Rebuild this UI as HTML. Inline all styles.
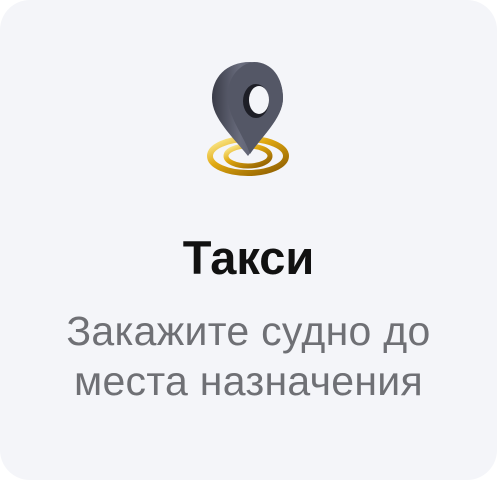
<!DOCTYPE html>
<html><head><style>
html,body{margin:0;padding:0;background:#fff;}
.card{position:absolute;left:0;top:0;width:497px;height:480px;background:#f4f5f9;border-radius:30px;overflow:hidden;font-family:"Liberation Sans",sans-serif;}
.t{position:absolute;left:0;width:497px;text-align:center;top:230px;font-size:47px;font-weight:bold;color:#111;}
.s{position:absolute;left:0;width:497px;text-align:center;top:306px;font-size:41px;line-height:50px;color:#6f7075;letter-spacing:0.3px;}
svg{position:absolute;left:0;top:0}
</style></head><body>
<div class="card">
<svg width="497" height="200">
<defs>
<linearGradient id="g" x1="0" y1="0" x2="1" y2="1"><stop offset="0" stop-color="#fff3a0"/><stop offset="0.4" stop-color="#e0a810"/><stop offset="1" stop-color="#8a5a00"/></linearGradient>
<linearGradient id="p" x1="0" y1="0" x2="1" y2="0"><stop offset="0" stop-color="#3a3c48"/><stop offset="0.4" stop-color="#6a6d7e"/><stop offset="1" stop-color="#454856"/></linearGradient>
</defs>
<ellipse cx="248" cy="156" rx="38" ry="17" fill="none" stroke="url(#g)" stroke-width="6"/>
<ellipse cx="248" cy="156" rx="22" ry="10" fill="none" stroke="url(#g)" stroke-width="5"/>
<path d="M250 62 C226 62 212 78 212 98 C212 118 232 136 248 156 C262 136 283 118 283 98 C283 78 270 62 250 62 Z" fill="url(#p)"/>
<path d="M254 62 C238 64 226 80 228 100 C230 120 244 136 250 154 C262 136 283 118 283 98 C283 78 272 62 254 62 Z" fill="#545766"/>
<ellipse cx="256" cy="101" rx="13" ry="17" fill="#1e1f27"/>
<ellipse cx="259" cy="100" rx="10" ry="14" fill="#f4f5f9"/>
</svg>
<div class="t">Такси</div>
<div class="s">Закажите судно до<br>места назначения</div>
</div>
</body></html>
